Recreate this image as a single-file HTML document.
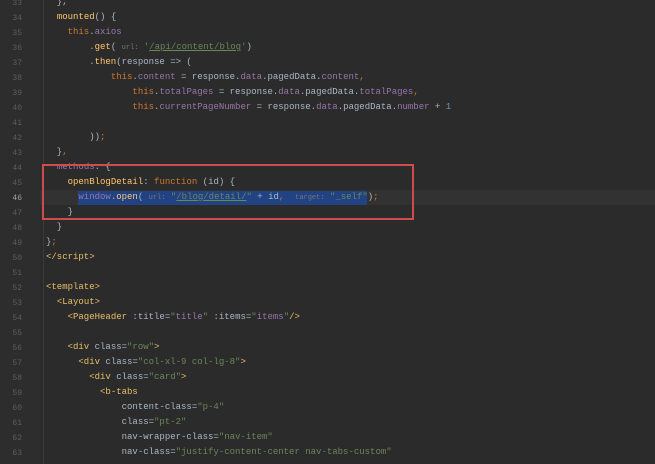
<!DOCTYPE html>
<html><head><style>
html,body{margin:0;padding:0;width:655px;height:464px;overflow:hidden;background:#2b2b2b}
.g{position:absolute;left:0;top:0;width:40px;height:464px;background:#2d2d2d}
.ln{position:absolute;left:0;width:22px;text-align:right;color:#5a5d60;font:8px "Liberation Mono",monospace}
.code{position:absolute;left:46px;top:-5px;font:9px/15px "Liberation Mono",monospace;color:#a9b7c6}
.l{height:15px;white-space:pre}
.k{color:#cc7832}.f{color:#ffc66d}.p{color:#9876aa}.s{color:#6a8759}.t{color:#e8bf6a}.h{color:#787878;font-size:7px}
.u{text-decoration:underline}
.cur{position:absolute;left:40px;top:190px;width:615px;height:15px;background:#323232}
.sel{position:absolute;left:78px;top:191px;width:289px;height:14px;background:#214283}
.box{position:absolute;left:42px;top:164px;width:368px;height:52px;border:2px solid #d24b4b}
.vl{position:absolute;left:43px;top:0;width:1px;height:464px;background:#3b3b3b}
</style></head><body>
<div class="g"></div>
<div class="cur"></div>
<div class="sel"></div>
<div class="vl"></div>
<div class="code"><div class="l">  },</div><div class="l">  <span class="f">mounted</span>() {</div><div class="l">    <span class="k">this</span>.<span class="p">axios</span></div><div class="l">        .<span class="f">get</span>( <span class="h">url:</span> <span class="s">'<span class="u">/api/content/blog</span>'</span>)</div><div class="l">        .<span class="f">then</span>(response => (</div><div class="l">            <span class="k">this</span>.<span class="p">content</span> = response.<span class="p">data</span>.pagedData.<span class="p">content</span><span class="k">,</span></div><div class="l">                <span class="k">this</span>.<span class="p">totalPages</span> = response.<span class="p">data</span>.pagedData.<span class="p">totalPages</span><span class="k">,</span></div><div class="l">                <span class="k">this</span>.<span class="p">currentPageNumber</span> = response.<span class="p">data</span>.pagedData.<span class="p">number</span> + <span style="color:#6897bb">1</span></div><div class="l"> </div><div class="l">        ))<span class="k">;</span></div><div class="l">  }<span class="k">,</span></div><div class="l">  <span class="p">methods</span>: {</div><div class="l">    <span class="f">openBlogDetail</span>: <span class="k">function</span> (id) {</div><div class="l">      <span class="p">window</span>.<span class="f">open</span>( <span class="h">url:</span> <span class="s">"<span class="u">/blog/detail/</span>"</span> + id<span class="k">,</span>  <span class="h">target:</span> <span class="s">"_self"</span>)<span class="k">;</span></div><div class="l">    }</div><div class="l">  }</div><div class="l">}<span class="k">;</span></div><div class="l"><span class="t">&lt;/script&gt;</span></div><div class="l"> </div><div class="l"><span class="t">&lt;template&gt;</span></div><div class="l">  <span class="t">&lt;Layout&gt;</span></div><div class="l">    <span class="t">&lt;PageHeader</span> :title=<span class="s">"<span class="p">title</span>"</span> :items=<span class="s">"<span class="p">items</span>"</span><span class="t">/&gt;</span></div><div class="l"> </div><div class="l">    <span class="t">&lt;div</span> class=<span class="s">"row"</span><span class="t">&gt;</span></div><div class="l">      <span class="t">&lt;div</span> class=<span class="s">"col-xl-9 col-lg-8"</span><span class="t">&gt;</span></div><div class="l">        <span class="t">&lt;div</span> class=<span class="s">"card"</span><span class="t">&gt;</span></div><div class="l">          <span class="t">&lt;b-tabs</span></div><div class="l">              content-class=<span class="s">"p-4"</span></div><div class="l">              class=<span class="s">"pt-2"</span></div><div class="l">              nav-wrapper-class=<span class="s">"nav-item"</span></div><div class="l">              nav-class=<span class="s">"justify-content-center nav-tabs-custom"</span></div></div>
<div class="box"></div>
<div style="position:absolute;left:0;top:0">
<div class="ln" style="top:-1px">33</div><div class="ln" style="top:14px">34</div><div class="ln" style="top:29px">35</div><div class="ln" style="top:44px">36</div><div class="ln" style="top:59px">37</div><div class="ln" style="top:74px">38</div><div class="ln" style="top:89px">39</div><div class="ln" style="top:104px">40</div><div class="ln" style="top:119px">41</div><div class="ln" style="top:134px">42</div><div class="ln" style="top:149px">43</div><div class="ln" style="top:164px">44</div><div class="ln" style="top:179px">45</div><div class="ln" style="top:194px;color:#a4a3a3">46</div><div class="ln" style="top:209px">47</div><div class="ln" style="top:224px">48</div><div class="ln" style="top:239px">49</div><div class="ln" style="top:254px">50</div><div class="ln" style="top:269px">51</div><div class="ln" style="top:284px">52</div><div class="ln" style="top:299px">53</div><div class="ln" style="top:314px">54</div><div class="ln" style="top:329px">55</div><div class="ln" style="top:344px">56</div><div class="ln" style="top:359px">57</div><div class="ln" style="top:374px">58</div><div class="ln" style="top:389px">59</div><div class="ln" style="top:404px">60</div><div class="ln" style="top:419px">61</div><div class="ln" style="top:434px">62</div><div class="ln" style="top:449px">63</div>
</div>
</body></html>
